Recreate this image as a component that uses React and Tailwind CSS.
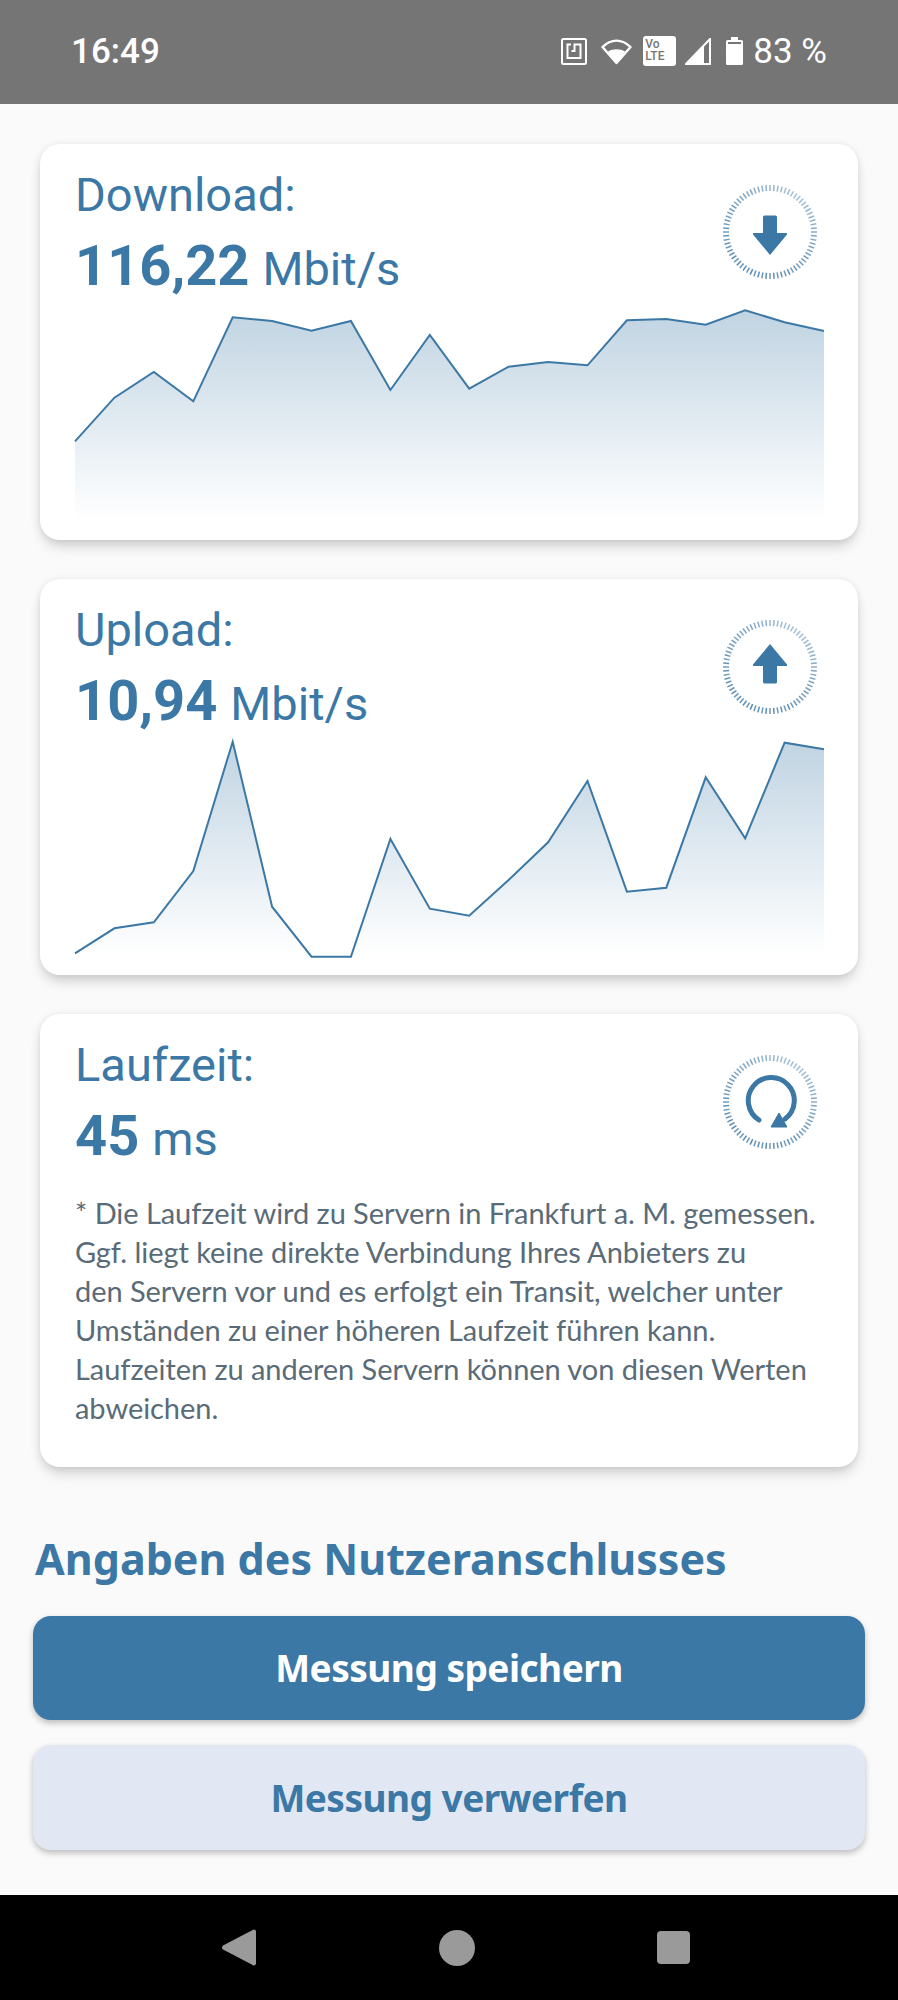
const BLUE = "#3b78a5";
const STEP = 749 / 19;
const DL = [484,353,276,364,112,123,152,123,330,165,326,260,246,256,121,117,134,91,127,153].map((z) => z / 3 - 20);
const UL = [760,685,667,513,125,620,770,770,417,626,647,540,427,243,575,563,232,415,128,148].map((z) => z / 3 - 35);

function Chart({ data, id }) {
  const line = data.map((y, i) => `${(i * STEP).toFixed(1)},${y.toFixed(1)}`).join(" ");
  return (
    <svg width="749" height="220" viewBox="0 0 749 220" className="block overflow-visible">
      <defs>
        <linearGradient id={id} x1="0" y1="0" x2="0" y2="1">
          <stop offset="0" stopColor={BLUE} stopOpacity="0.32" />
          <stop offset="1" stopColor={BLUE} stopOpacity="0" />
        </linearGradient>
      </defs>
      <polygon points={`0,220 ${line} 749,220`} fill={`url(#${id})`} />
      <polyline points={line} fill="none" stroke={BLUE} strokeWidth="2" strokeLinejoin="miter" />
    </svg>
  );
}

function Ring({ children }) {
  const ticks = [];
  for (let i = 0; i < 72; i++) {
    const a = (i * 5 * Math.PI) / 180;
    const o = 0.45 + 0.4 * Math.abs(Math.sin(a * 0.5 + 0.5)) * (i % 2 ? 1 : 0.8);
    ticks.push(
      <line key={i} x1={48 + 41 * Math.cos(a)} y1={48 + 41 * Math.sin(a)} x2={48 + 47 * Math.cos(a)} y2={48 + 47 * Math.sin(a)} stroke={BLUE} strokeOpacity={o} strokeWidth="1.5" />
    );
  }
  return (
    <svg width="96" height="96" viewBox="0 0 96 96" className="block">
      {ticks}
      {children}
    </svg>
  );
}

function Card({ title, value, unit, icon, children }) {
  return (
    <section className="rounded-[20px] bg-white px-[35px] shadow-[0_8px_14px_-3px_rgba(0,0,0,0.2),0_0_7px_rgba(0,0,0,0.08)]">
      <div className="flex h-[156px] justify-between">
        <div className="text-[#3b78a5]" style={{ fontFamily: "Roboto, sans-serif" }}>
          <div className="pt-[19px] text-[47px] leading-[64px]">{title}</div>
          <div className="flex h-[73px] items-baseline gap-[13px] leading-[79px]">
            <span className="text-[56px] font-bold">{value}</span>
            <span className="text-[47px]">{unit}</span>
          </div>
        </div>
        <div className="mr-[5px] mt-[40px]">{icon}</div>
      </div>
      {children}
    </section>
  );
}

export default function App() {
  return (
    <div className="flex h-[2000px] w-[898px] flex-col bg-[#fafafa]">
      <header className="flex h-[104px] shrink-0 items-center justify-between bg-[#757575] pb-[2px] pl-[71px] pr-[71px] text-white" style={{ fontFamily: "Roboto, sans-serif" }}>
        <span className="text-[35px] font-medium leading-none">16:49</span>
        <div className="flex items-center">
          <svg width="26" height="27" viewBox="0 0 26 27" fill="none" stroke="#fff" className="mr-[14px]">
            <rect x="1" y="1" width="24" height="25" rx="1.5" strokeWidth="2" />
            <path d="M10 6.500H6.500V20H19.500V6.500H13.500V13H10.500" strokeWidth="2" />
          </svg>
          <svg width="31" height="27" viewBox="0 0 31 27" className="mr-[11px]">
            <path d="M15.5 25 1.5 9C10 0.5 21 0.5 29.5 9Z" fill="none" stroke="#fff" strokeWidth="2.4" strokeLinejoin="round" />
            <path d="M15.5 26 7 13.5C12 10.5 19 10.5 24 13.5Z" fill="#fff" />
          </svg>
          <div className="mr-[9px] flex h-[30px] w-[33px] flex-col rounded-[3px] bg-white pl-[2px] pt-[2px] text-[12px] font-medium leading-[12px] text-[#757575]">
            <span>Vo</span>
            <span>LTE</span>
          </div>
          <svg width="26" height="27" viewBox="0 0 26 27" className="mr-[15px]">
            <path d="M25 1V26H1Z" fill="none" stroke="#fff" strokeWidth="2" />
            <path d="M19 7V26H1Z" fill="#fff" />
          </svg>
          <svg width="17" height="28" viewBox="0 0 17 28" className="mr-[10px]">
            <path d="M5 0h7v3h3.5a1.5 1.5 0 0 1 1.5 1.5V26.5a1.5 1.5 0 0 1-1.5 1.5H1.5A1.5 1.5 0 0 1 0 26.5V4.500A1.500 1.500 0 0 1 1.500 3H5Z" fill="#fff" />
            <rect x="2" y="5" width="13" height="2" fill="#757575" />
          </svg>
          <span className="text-[35px] leading-none">83 %</span>
        </div>
      </header>

      <main className="flex-1 overflow-hidden">
        <div className="flex flex-col gap-[39px] px-[40px] pt-[40px]">
          <Card
            title="Download:"
            value="116,22"
            unit="Mbit/s"
            icon={
              <Ring>
                <path d="M41 33a1.500 1.500 0 0 1 1.500-1.500h11A1.500 1.500 0 0 1 55 33V49h9a1 1 0 0 1 .8 1.700L48 71 31.200 50.700A1 1 0 0 1 32 49h9Z" fill={BLUE} />
              </Ring>
            }
          >
            <Chart data={DL} id="dl" />
            <div className="h-[20px]" />
          </Card>
          <Card
            title="Upload:"
            value="10,94"
            unit="Mbit/s"
            icon={
              <Ring>
                <path d="M41 63a1.500 1.500 0 0 0 1.500 1.500h11A1.500 1.500 0 0 0 55 63V47h9a1 1 0 0 0 .8-1.700L48 25 31.200 45.300A1 1 0 0 0 32 47h9Z" fill={BLUE} />
              </Ring>
            }
          >
            <Chart data={UL} id="ul" />
            <div className="h-[20px]" />
          </Card>
          <Card
            title="Laufzeit:"
            value="45"
            unit="ms"
            icon={
              <Ring>
                <path d="M37 66A23 23 0 1 1 63 65" fill="none" stroke={BLUE} strokeWidth="5" strokeLinecap="round" />
                <path d="M57 59 65 73 49 73Z" fill={BLUE} stroke={BLUE} strokeLinejoin="round" />
              </Ring>
            }
          >
            <p className="pb-[40px] pt-[23px] text-[29px] leading-[39px] tracking-[-0.05px] text-[#5a6b78]" style={{ fontFamily: "Lato, sans-serif" }}>
              * Die Laufzeit wird zu Servern in Frankfurt a. M. gemessen.
              <br />
              Ggf. liegt keine direkte Verbindung Ihres Anbieters zu
              <br />
              den Servern vor und es erfolgt ein Transit, welcher unter
              <br />
              Umständen zu einer höheren Laufzeit führen kann.
              <br />
              Laufzeiten zu anderen Servern können von diesen Werten
              <br />
              abweichen.
            </p>
          </Card>
        </div>
        <h2 className="mt-[64px] pl-[35px] text-[43px] font-bold leading-[56px] text-[#3b78a5]" style={{ fontFamily: "'Noto Sans', sans-serif" }}>
          Angaben des Nutzeranschlusses
        </h2>
        <div className="mt-[29px] flex flex-col gap-[25px] px-[33px]" style={{ fontFamily: "'Noto Sans', sans-serif" }}>
          <button className="h-[104px] rounded-[18px] bg-[#3b78a5] text-[37px] font-bold tracking-[-0.5px] text-white shadow-[0_3px_6px_rgba(0,0,0,0.25)]">
            Messung speichern
          </button>
          <button className="h-[105px] rounded-[18px] bg-[#e2e8f3] text-[37px] font-bold tracking-[-0.5px] text-[#3b78a5] shadow-[0_3px_6px_rgba(0,0,0,0.25)]">
            Messung verwerfen
          </button>
        </div>
      </main>

      <nav className="flex h-[105px] shrink-0 items-center bg-black pl-[222px]">
        <svg width="34" height="37" viewBox="0 0 34 37" className="mr-[183px]">
          <path d="M32 0.500a2 2 0 0 1 2 2V34.500a2 2 0 0 1-3.300 1.500L1 20.500a2.500 2.500 0 0 1 0-4L30.700 1Z" fill="#9a9a9a" />
        </svg>
        <div className="mr-[182px] h-[36px] w-[36px] rounded-full bg-[#9a9a9a]" />
        <div className="h-[33px] w-[33px] rounded-[4px] bg-[#9a9a9a]" />
      </nav>
    </div>
  );
}
